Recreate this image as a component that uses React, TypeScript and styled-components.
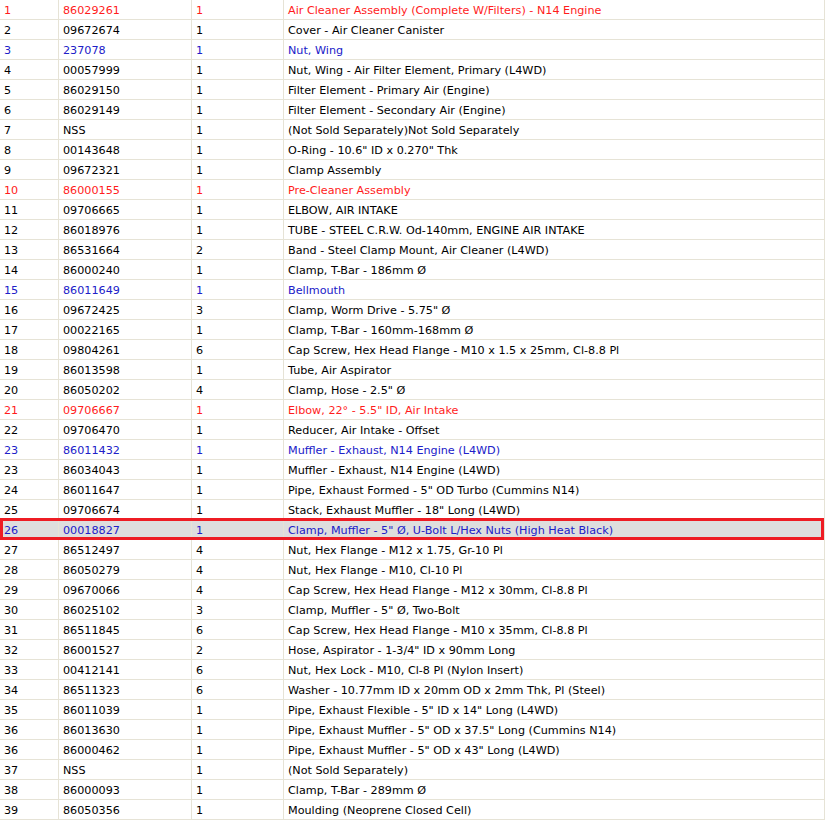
import React from "react";
import styled, { createGlobalStyle } from "styled-components";

const Global = createGlobalStyle`
  html, body { margin: 0; padding: 0; background: #ffffff; }
  body { font-family: "DejaVu Sans", Verdana, sans-serif; font-size: 11.2px; }
`;

type Tone = "normal" | "red" | "blue";
type Part = { ref: string; num: string; qty: string; desc: string; tone?: Tone; selected?: boolean };

const parts: Part[] = [
  { ref: "1", num: "86029261", qty: "1", desc: "Air Cleaner Assembly (Complete W/Filters) - N14 Engine", tone: "red" },
  { ref: "2", num: "09672674", qty: "1", desc: "Cover - Air Cleaner Canister" },
  { ref: "3", num: "237078", qty: "1", desc: "Nut, Wing", tone: "blue" },
  { ref: "4", num: "00057999", qty: "1", desc: "Nut, Wing - Air Filter Element, Primary (L4WD)" },
  { ref: "5", num: "86029150", qty: "1", desc: "Filter Element - Primary Air (Engine)" },
  { ref: "6", num: "86029149", qty: "1", desc: "Filter Element - Secondary Air (Engine)" },
  { ref: "7", num: "NSS", qty: "1", desc: "(Not Sold Separately)Not Sold Separately" },
  { ref: "8", num: "00143648", qty: "1", desc: "O-Ring - 10.6\" ID x 0.270\" Thk" },
  { ref: "9", num: "09672321", qty: "1", desc: "Clamp Assembly" },
  { ref: "10", num: "86000155", qty: "1", desc: "Pre-Cleaner Assembly", tone: "red" },
  { ref: "11", num: "09706665", qty: "1", desc: "ELBOW, AIR INTAKE" },
  { ref: "12", num: "86018976", qty: "1", desc: "TUBE - STEEL C.R.W. Od-140mm, ENGINE AIR INTAKE" },
  { ref: "13", num: "86531664", qty: "2", desc: "Band - Steel Clamp Mount, Air Cleaner (L4WD)" },
  { ref: "14", num: "86000240", qty: "1", desc: "Clamp, T-Bar - 186mm Ø" },
  { ref: "15", num: "86011649", qty: "1", desc: "Bellmouth", tone: "blue" },
  { ref: "16", num: "09672425", qty: "3", desc: "Clamp, Worm Drive - 5.75\" Ø" },
  { ref: "17", num: "00022165", qty: "1", desc: "Clamp, T-Bar - 160mm-168mm Ø" },
  { ref: "18", num: "09804261", qty: "6", desc: "Cap Screw, Hex Head Flange - M10 x 1.5 x 25mm, Cl-8.8 Pl" },
  { ref: "19", num: "86013598", qty: "1", desc: "Tube, Air Aspirator" },
  { ref: "20", num: "86050202", qty: "4", desc: "Clamp, Hose - 2.5\" Ø" },
  { ref: "21", num: "09706667", qty: "1", desc: "Elbow, 22° - 5.5\" ID, Air Intake", tone: "red" },
  { ref: "22", num: "09706470", qty: "1", desc: "Reducer, Air Intake - Offset" },
  { ref: "23", num: "86011432", qty: "1", desc: "Muffler - Exhaust, N14 Engine (L4WD)", tone: "blue" },
  { ref: "23", num: "86034043", qty: "1", desc: "Muffler - Exhaust, N14 Engine (L4WD)" },
  { ref: "24", num: "86011647", qty: "1", desc: "Pipe, Exhaust Formed - 5\" OD Turbo (Cummins N14)" },
  { ref: "25", num: "09706674", qty: "1", desc: "Stack, Exhaust Muffler - 18\" Long (L4WD)" },
  { ref: "26", num: "00018827", qty: "1", desc: "Clamp, Muffler - 5\" Ø, U-Bolt L/Hex Nuts (High Heat Black)", tone: "blue", selected: true },
  { ref: "27", num: "86512497", qty: "4", desc: "Nut, Hex Flange - M12 x 1.75, Gr-10 Pl" },
  { ref: "28", num: "86050279", qty: "4", desc: "Nut, Hex Flange - M10, Cl-10 Pl" },
  { ref: "29", num: "09670066", qty: "4", desc: "Cap Screw, Hex Head Flange - M12 x 30mm, Cl-8.8 Pl" },
  { ref: "30", num: "86025102", qty: "3", desc: "Clamp, Muffler - 5\" Ø, Two-Bolt" },
  { ref: "31", num: "86511845", qty: "6", desc: "Cap Screw, Hex Head Flange - M10 x 35mm, Cl-8.8 Pl" },
  { ref: "32", num: "86001527", qty: "2", desc: "Hose, Aspirator - 1-3/4\" ID x 90mm Long" },
  { ref: "33", num: "00412141", qty: "6", desc: "Nut, Hex Lock - M10, Cl-8 Pl (Nylon Insert)" },
  { ref: "34", num: "86511323", qty: "6", desc: "Washer - 10.77mm ID x 20mm OD x 2mm Thk, Pl (Steel)" },
  { ref: "35", num: "86011039", qty: "1", desc: "Pipe, Exhaust Flexible - 5\" ID x 14\" Long (L4WD)" },
  { ref: "36", num: "86013630", qty: "1", desc: "Pipe, Exhaust Muffler - 5\" OD x 37.5\" Long (Cummins N14)" },
  { ref: "36", num: "86000462", qty: "1", desc: "Pipe, Exhaust Muffler - 5\" OD x 43\" Long (L4WD)" },
  { ref: "37", num: "NSS", qty: "1", desc: "(Not Sold Separately)" },
  { ref: "38", num: "86000093", qty: "1", desc: "Clamp, T-Bar - 289mm Ø" },
  { ref: "39", num: "86050356", qty: "1", desc: "Moulding (Neoprene Closed Cell)" },
];

const toneColor: Record<Tone, string> = {
  normal: "#000000",
  red: "#ff1c1c",
  blue: "#2020c8",
};

const Table = styled.div`
  width: 825px;
  display: flex;
  flex-direction: column;
  border-right: 1px solid #e6e3d6;
  box-sizing: border-box;
`;

const Row = styled.div<{ $tone: Tone; $selected?: boolean }>`
  position: relative;
  display: grid;
  grid-template-columns: 59px 133px 92px 1fr;
  height: 20px;
  box-sizing: border-box;
  border-bottom: 1px solid #e6e3d6;
  color: ${(p) => toneColor[p.$tone]};
  background: ${(p) => (p.$selected ? "#dedede" : "#ffffff")};
  ${(p) =>
    p.$selected &&
    `
    &::after {
      content: "";
      position: absolute;
      left: 0;
      right: 0;
      top: -2px;
      bottom: -1px;
      border: 3px solid #ee1c24;
      pointer-events: none;
    }
  `}
`;

const Cell = styled.div<{ $last?: boolean }>`
  padding: 2px 0 0 4px;
  white-space: nowrap;
  overflow: hidden;
  border-right: ${(p) => (p.$last ? "none" : "1px solid #e6e3d6")};
  line-height: 17px;
`;

export default function App() {
  return (
    <>
      <Global />
      <Table>
        {parts.map((p, i) => (
          <Row key={i} $tone={p.tone ?? "normal"} $selected={p.selected}>
            <Cell>{p.ref}</Cell>
            <Cell>{p.num}</Cell>
            <Cell>{p.qty}</Cell>
            <Cell $last>{p.desc}</Cell>
          </Row>
        ))}
      </Table>
    </>
  );
}
